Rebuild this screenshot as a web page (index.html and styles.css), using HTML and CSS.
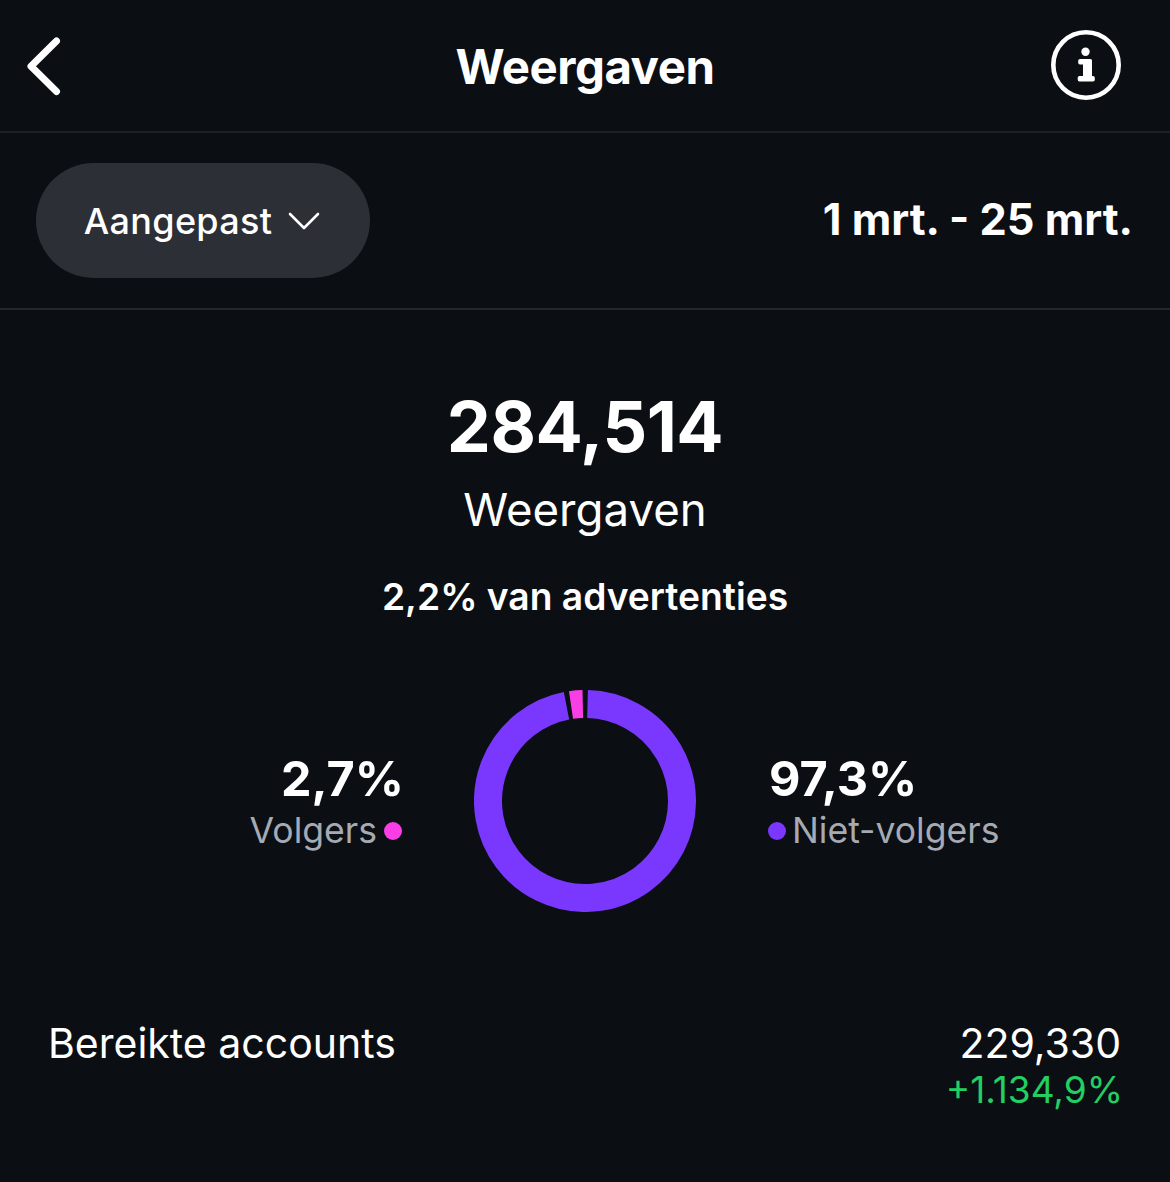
FILE: index.html
```html
<!DOCTYPE html>
<html lang="nl">
<head>
  <meta charset="UTF-8">
  <meta name="viewport" content="width=device-width, initial-scale=1.0">
  <title>Weergaven</title>
  <link rel="stylesheet" href="styles.css">
</head>
<body>
  <header class="top-bar">
    <svg class="back-icon" width="36" height="60" viewBox="0 0 36 60">
      <path d="M29.5 5 L4 30.3 L29.5 55.5"/>
    </svg>
    <h1 class="top-title">Weergaven</h1>
    <svg class="info-icon" width="70" height="70" viewBox="0 0 70 70">
      <circle class="info-ring" cx="35" cy="35" r="32.7"/>
      <circle class="info-fill" cx="34.5" cy="21.7" r="4.2"/>
      <path class="info-fill" d="M29 29 H39.5 a1.5 1.5 0 0 1 1.5 1.5 V46 h1 a1.8 1.8 0 0 1 1.8 1.8 V49.8 a1.8 1.8 0 0 1 -1.8 1.8 H28.5 a1.8 1.8 0 0 1 -1.8 -1.8 V47.8 a1.8 1.8 0 0 1 1.8 -1.8 H32 V34.6 H29 a1.8 1.8 0 0 1 -1.8 -1.8 V30.8 a1.8 1.8 0 0 1 1.8 -1.8 z"/>
    </svg>
  </header>

  <div class="filter-row">
    <button class="range-pill">
      <span>Aangepast</span>
      <svg class="pill-chevron" width="32" height="20" viewBox="0 0 32 20">
        <path d="M2 3 L16 17 L30 3"/>
      </svg>
    </button>
    <div class="range-dates">1 mrt. - 25 mrt.</div>
  </div>

  <section class="summary">
    <div class="summary-total">284,514</div>
    <div class="summary-label">Weergaven</div>
    <div class="summary-ads">2,2% van advertenties</div>
  </section>

  <section class="split">
    <div class="split-side split-left">
      <div class="split-value">2,7%</div>
      <div class="split-label">Volgers<span class="dot dot-pink"></span></div>
    </div>
    <svg class="donut" width="222" height="222" viewBox="0 0 222 222">
      <path class="donut-purple" d="M113.54 14.03 A97 97 0 1 1 92.49 15.78"/>
      <path class="donut-pink" d="M97 15.02 A97 97 0 0 1 108.8 14.03"/>
    </svg>
    <div class="split-side split-right">
      <div class="split-value">97,3%</div>
      <div class="split-label"><span class="dot dot-purple"></span>Niet-volgers</div>
    </div>
  </section>

  <section class="reach-row">
    <div class="reach-name">Bereikte accounts</div>
    <div class="reach-numbers">
      <div class="reach-value">229,330</div>
      <div class="reach-change">+1.134,9%</div>
    </div>
  </section>
</body>
</html>
```

FILE: styles.css
```css
body {
  font-family: Inter, 'Liberation Sans', sans-serif;
  background-color: #0b0e13;
  margin: 0;
  padding: 0;
  color: #fff;
  height: 1182px;
  overflow: hidden;
}

/* Top bar */
.top-bar {
  height: 133px;
  box-sizing: border-box;
  display: grid;
  grid-template-columns: 1fr auto 1fr;
  align-items: center;
  padding: 0 49px;
  border-bottom: 2px solid #1d2026;
}
.top-title {
  margin: 2px 0 0;
  font-size: 47.4px;
  font-weight: 700;
  letter-spacing: -0.5px;
}
.back-icon {
  margin-left: -22px;
}
.info-icon {
  justify-self: end;
  margin-bottom: 1px;
}
.back-icon path {
  fill: none;
  stroke: #fff;
  stroke-width: 7;
  stroke-linecap: round;
  stroke-linejoin: round;
}
.info-ring {
  fill: none;
  stroke: #fff;
  stroke-width: 4.6;
}
.info-fill {
  fill: #fff;
}

/* Date filter */
.filter-row {
  height: 177px;
  box-sizing: border-box;
  display: flex;
  align-items: center;
  justify-content: space-between;
  padding: 0 37px 0 36px;
  border-bottom: 2px solid #24272d;
}
.range-pill {
  width: 334px;
  height: 115px;
  border: none;
  border-radius: 58px;
  background-color: #2c2f35;
  color: #fff;
  font-family: inherit;
  font-size: 36px;
  font-weight: 500;
  letter-spacing: 0.3px;
  display: flex;
  align-items: center;
  justify-content: center;
  gap: 16px;
  padding: 0 2px 0 0;
}
.pill-chevron path {
  fill: none;
  stroke: #fff;
  stroke-width: 2.6;
  stroke-linecap: round;
  stroke-linejoin: round;
}
.range-dates {
  font-size: 43.3px;
  font-weight: 700;
  padding-bottom: 4px;
}

/* Totals */
.summary {
  text-align: center;
  padding-top: 75px;
}
.summary-total {
  font-size: 70px;
  font-weight: 700;
  letter-spacing: -0.5px;
  line-height: 84px;
}
.summary-label {
  font-size: 45.6px;
  line-height: 56px;
  margin-top: 13px;
}
.summary-ads {
  font-size: 37.2px;
  font-weight: 600;
  line-height: 42px;
  margin-top: 38px;
}

/* Donut */
.split {
  display: grid;
  grid-template-columns: 1fr 222px 1fr;
  column-gap: 72px;
  align-items: center;
  margin-top: 72px;
}
.split-side {
  padding-top: 2px;
}
.split-left {
  text-align: right;
}
.split-left .split-value {
  margin-right: -2px;
}
.split-right .split-value {
  padding-left: 1px;
}
.split-value {
  font-size: 48.5px;
  font-weight: 700;
  line-height: 56px;
}
.split-label {
  font-size: 35.6px;
  line-height: 44px;
  margin-top: 2px;
  color: #a5aab3;
  display: flex;
  align-items: center;
  gap: 7px;
}
.split-right .split-label {
  gap: 6px;
}
.split-left .split-label {
  justify-content: flex-end;
}
.dot {
  width: 18px;
  height: 18px;
  border-radius: 50%;
}
.dot-pink {
  background-color: #f93ee6;
}
.dot-purple {
  background-color: #7a38ff;
}
.donut path {
  fill: none;
  stroke-width: 28;
}
.donut-purple {
  stroke: #7a38ff;
}
.donut-pink {
  stroke: #f93ee6;
}

/* Reached accounts */
.reach-row {
  display: flex;
  justify-content: space-between;
  align-items: flex-start;
  padding: 0 49px 0 48px;
  margin-top: 107px;
}
.reach-name {
  font-size: 41px;
  line-height: 48px;
}
.reach-numbers {
  text-align: right;
}
.reach-value {
  font-size: 41px;
  line-height: 48px;
}
.reach-change {
  font-size: 37px;
  line-height: 46px;
  margin-right: -2px;
  color: #22cf62;
}
```
